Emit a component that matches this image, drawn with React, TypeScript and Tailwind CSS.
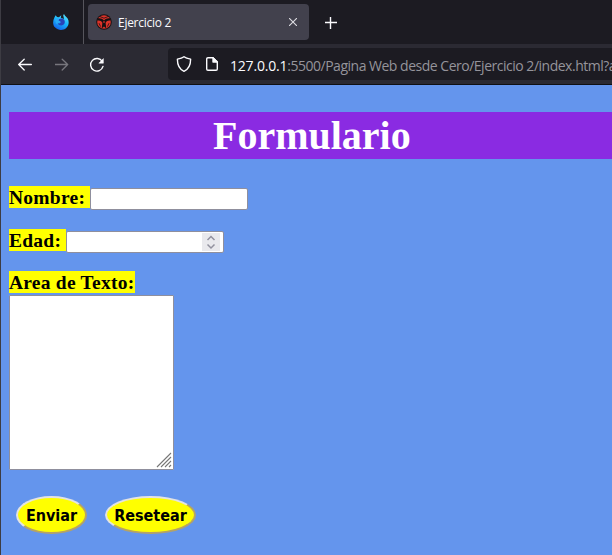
import React from 'react';

function FirefoxIcon() {
  return (
    <svg className="h-4 w-4" viewBox="0 0 16 16">
      <defs>
        <linearGradient id="fx" x1="0.8" y1="0" x2="0.3" y2="1">
          <stop offset="0" stopColor="#5be6ff" />
          <stop offset="0.5" stopColor="#18b2fa" />
          <stop offset="1" stopColor="#1260ea" />
        </linearGradient>
      </defs>
      <path d="M1.5 3.2 2.7 1.3 4 3 6 3.2 8.3 1.2 7.8 3.8 11 5 10.2 1.2 11 0C12 2.4 13.5 2.6 14.8 4.8 16.4 8 15.8 11.4 13.2 13.9 10.1 16.7 5.2 16.5 2.2 13.6-.2 11.2-.6 7.3 1.5 3.2Z" fill="url(#fx)" />
      <path d="M5.2 5.2 8.6 4.6C11.2 4.9 12.2 6.6 11.7 8.9 11 11.1 8.5 12 6.1 11L4 9.2 6.3 9.4 8 8.2 5.8 7.6Z" fill="#2942b8" />
      <path d="M2 5 4.5 4.5 6.2 5.3 5.3 6.7 7.8 7.2 6.2 8.8 4.2 8.8 5.5 10.5 3 9.5Z" fill="#29a9f7" />
    </svg>
  );
}

function TabIcon() {
  return (
    <svg className="h-4 w-4 shrink-0" viewBox="0 0 16 16">
      <circle cx="8" cy="8" r="7.8" fill="#191315" />
      <circle cx="8" cy="8" r="6.8" fill="#dc3329" />
      <path d="M1 4.6C4 3.6 6.2 4.6 8 6.4 9.8 4.6 12 3.6 15 4.6L14.2 6.6C12.2 6.2 10.6 7 9.6 8.7L10.3 14.6 8 12.4 5.7 14.6 6.4 8.7C5.4 7 3.8 6.2 1.8 6.6Z" fill="#151113" />
      <path d="M4 2.6 8 4.2 12 2.6M3 9.2 4.6 12.6M13 9.2 11.4 12.6" fill="none" stroke="#151113" strokeWidth=".8" />
      <circle cx="8" cy="8" r=".9" fill="#c52b25" />
    </svg>
  );
}

function TabStrip() {
  return (
    <div className="flex h-11 bg-[#1c1b22]">
      <div className="flex w-[83px] items-center border-r border-[#56555c] pl-[52px]">
        <FirefoxIcon />
      </div>
      <div className="mt-1 ml-1 flex h-9 w-[221px] items-center rounded bg-[#42414d] pl-2 text-[#fbfbfe]">
        <TabIcon />
        <span className="ml-[6px] w-[160px] pt-[2px] whitespace-nowrap font-['Open_Sans','Noto_Sans',sans-serif] text-[12px] tracking-[-0.28px]">Ejercicio 2</span>
        <svg className="ml-[11px] h-2 w-2" viewBox="0 0 8 8" fill="none" stroke="#dedde3" strokeWidth="1.1"><path d="m0 0 8 8M8 0 0 8" /></svg>
      </div>
      <svg className="mt-[17px] ml-[16px] h-3 w-3" viewBox="0 0 12 12" fill="none" stroke="#fbfbfe" strokeWidth="1.4"><path d="M5.5 0v12M0 5.5h12" /></svg>
    </div>
  );
}

function Toolbar() {
  return (
    <div className="flex h-[41px] border-b border-[#101014] bg-[#2b2a33]">
      <svg className="mt-[14px] ml-[17px] h-[14px] w-[14px]" viewBox="0 0 14 14" fill="none" stroke="#fbfbfe" strokeWidth="1.3" strokeLinecap="round" strokeLinejoin="round"><path d="M13.4 6.5H.7M6.2 1.2.7 6.5 6.2 12" /></svg>
      <svg className="mt-[14px] ml-[23px] h-[14px] w-[14px]" viewBox="0 0 14 14" fill="none" stroke="#77767d" strokeWidth="1.3" strokeLinecap="round" strokeLinejoin="round"><path d="M0 6.5h12.7M7.2 1.2l5.5 5.3L7.2 12" /></svg>
      <svg className="mt-[13px] ml-[20px] h-4 w-4" viewBox="0 0 16 16" fill="none" stroke="#fbfbfe" strokeWidth="1.4"><path d="M13.3 4.5A6.3 6.3 0 1 0 14 9.4" strokeLinecap="round" /><path d="M14.4 1.6v4.6H9.8Z" fill="#fbfbfe" strokeWidth=".5" strokeLinejoin="round" /></svg>
      <div className="mt-1 ml-[63px] flex h-8 flex-1 overflow-hidden rounded-l bg-[#1c1b22]">
        <svg className="mt-2 ml-2 h-4 w-4 shrink-0" viewBox="0 0 16 16" fill="none" stroke="#fbfbfe" strokeWidth="1.4" strokeLinejoin="round"><path d="M8 .7C6.4 2 4 2.7 1.4 3.1 1.3 8.9 3.4 13.2 8 15.3 12.6 13.2 14.7 8.9 14.6 3.1 12 2.7 9.6 2 8 .7Z" /></svg>
        <svg className="mt-[9px] ml-[14px] h-[14px] w-3 shrink-0" viewBox="0 0 12 14" fill="none" stroke="#fbfbfe" strokeWidth="1.4" strokeLinejoin="round"><path d="M7 .7H2Q.7.7.7 2v10q0 1.3 1.3 1.3h8q1.3 0 1.3-1.3V5Z" /><path d="M7 .7V5h4.3Z" fill="#fbfbfe" /></svg>
        <span className="ml-[12px] whitespace-nowrap font-['Open_Sans','Noto_Sans',sans-serif] text-[14px] leading-[35px] tracking-[-0.49px] text-[#95949b]"><span className="tracking-[-0.2px] text-[#fbfbfe]">127.0.0.1</span>:5500/Pagina Web desde Cero/Ejercicio 2/index.html?a</span>
      </div>
    </div>
  );
}

const labelClass = "h-[22px] shrink-0 whitespace-pre bg-[#ffff00] text-[19.5px] leading-[24px]";
const buttonClass = "h-[38px] rounded-[50%] border-2 border-t-[#e3e3e3] border-r-[#b5a365] border-b-[#b5a365] border-l-[#e3e3e3] bg-[#ffff00] text-center font-['DejaVu_Sans_Condensed','DejaVu_Sans',sans-serif] text-[16px] font-bold text-black";

export default function App() {
  return (
    <div className="h-[555px] w-[612px] overflow-hidden border-l border-[#3d3c43] bg-[#6495ed]">
      <TabStrip />
      <Toolbar />
      <main className="pt-[27px] pl-2 font-['Liberation_Serif',serif] font-bold text-black">
        <h1 className="h-[47px] bg-[#8a2be2] pl-[204px] text-[40px] leading-[48px] text-white">Formulario</h1>
        <form>
          <div className="mt-[27px] flex h-[23px]">
            <label className={labelClass + " w-[81px] tracking-[0.25px]"} htmlFor="nombre">Nombre: </label>
            <input id="nombre" className="mt-[2px] h-[22px] w-[158px] rounded-[2px] border border-[#8f8f9d] bg-white" />
          </div>
          <div className="mt-5 flex h-[23px]">
            <label className={labelClass + " w-[57px] tracking-[0.25px]"} htmlFor="edad">Edad: </label>
            <div className="mt-[2px] flex h-[22px] w-[158px] rounded-[2px] border border-[#8f8f9d] bg-white">
              <input id="edad" className="w-[135px] bg-transparent" />
              <div className="mt-[1px] h-[18px] w-[18px] bg-[#e9e9ed]">
                <svg className="h-[18px] w-[18px]" viewBox="0 0 18 18" fill="none" stroke="#92919f" strokeWidth="1.5"><path d="m5.5 7 3.5-3.5L12.5 7M5.5 11.5 9 15l3.5-3.5" /></svg>
              </div>
            </div>
          </div>
          <label className={labelClass + " mt-[19px] block w-[126px] tracking-[0.24px]"} htmlFor="texto">Area de Texto:</label>
          <div className="mt-[2px] flex h-[175px] w-[165px] items-end rounded-[1px] border border-[#8f8f9d] bg-white">
            <textarea id="texto" className="h-full w-[146px] resize-none" />
            <svg className="mb-[1px] h-[16px] w-[16px]" viewBox="0 0 16 16" fill="none" stroke="#777" strokeWidth="1.1"><path d="M1 15 15 1M5 15 15 5M9 15l6-6M13 15l2-2" /></svg>
          </div>
          <div className="mt-[26px] flex gap-[18px] pl-[7px]">
            <button type="button" className={buttonClass + " w-[71px]"}><span className="relative top-px -mx-2">Enviar</span></button>
            <button type="button" className={buttonClass + " w-[91px]"}><span className="relative top-px -mx-2">Resetear</span></button>
          </div>
        </form>
      </main>
    </div>
  );
}
